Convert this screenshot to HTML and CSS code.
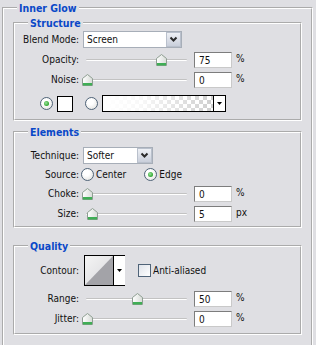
FILE: index.html
```html
<!DOCTYPE html>
<html>
<head>
<meta charset="utf-8">
<link rel="stylesheet" href="styles.css">
</head>
<body>
<fieldset class="grp outer">
  <legend class="title">Inner Glow</legend>

  <fieldset class="grp sub structure">
    <legend class="title">Structure</legend>
    <div class="row">
      <span class="lbl">Blend Mode:</span>
      <div class="select sel-blend">
        <span class="val">Screen</span>
        <span class="btn"><svg width="13" height="13" viewBox="0 0 13 13"><path d="M3.5 4.5 L6.5 7.5 L9.5 4.5" fill="none" stroke="#2b2b2b" stroke-width="2"/></svg></span>
      </div>
    </div>
    <div class="row r-opacity">
      <span class="lbl">Opacity:</span>
      <div class="slider"><div class="rail"><div class="track"></div><span class="thumb" style="left:calc(75% - 5px)"><svg width="11" height="12" viewBox="0 0 11 12"><defs><linearGradient id="tg1" x1="0" y1="0" x2="1" y2="0"><stop offset="0" stop-color="#ffffff"/><stop offset="1" stop-color="#d8dcd8"/></linearGradient></defs><path d="M0.5 4.5 L5.5 0.5 L10.5 4.5 V11.5 H0.5 Z" fill="url(#tg1)" stroke="#8e9e92"/><rect x="1" y="9" width="9" height="2.5" fill="#3fae55"/></svg></span></div></div>
      <div class="num">75</div><span class="unit">%</span>
    </div>
    <div class="row r-noise">
      <span class="lbl">Noise:</span>
      <div class="slider"><div class="rail"><div class="track"></div><span class="thumb" style="left:calc(0% - 5px)"><svg width="11" height="12" viewBox="0 0 11 12"><path d="M0.5 4.5 L5.5 0.5 L10.5 4.5 V11.5 H0.5 Z" fill="url(#tg1)" stroke="#8e9e92"/><rect x="1" y="9" width="9" height="2.5" fill="#3fae55"/></svg></span></div></div>
      <div class="num">0</div><span class="unit">%</span>
    </div>
    <div class="row r-fill">
      <span class="radio on"></span>
      <span class="swatch"></span>
      <span class="radio r2"></span>
      <div class="gradpick">
        <span class="grad"></span>
        <span class="arrow"><svg width="5" height="3" viewBox="0 0 5 3"><path d="M0 0 H5 L2.5 3 Z" fill="#000"/></svg></span>
      </div>
    </div>
  </fieldset>

  <fieldset class="grp sub elements">
    <legend class="title">Elements</legend>
    <div class="row">
      <span class="lbl">Technique:</span>
      <div class="select sel-tech">
        <span class="val">Softer</span>
        <span class="btn"><svg width="13" height="13" viewBox="0 0 13 13"><path d="M3.5 4.5 L6.5 7.5 L9.5 4.5" fill="none" stroke="#2b2b2b" stroke-width="2"/></svg></span>
      </div>
    </div>
    <div class="row r-source">
      <span class="lbl">Source:</span>
      <span class="radio rs1"></span><span class="rtext">Center</span>
      <span class="radio on rs2"></span><span class="rtext">Edge</span>
    </div>
    <div class="row r-choke">
      <span class="lbl">Choke:</span>
      <div class="slider"><div class="rail"><div class="track"></div><span class="thumb" style="left:calc(0% - 5px)"><svg width="11" height="12" viewBox="0 0 11 12"><path d="M0.5 4.5 L5.5 0.5 L10.5 4.5 V11.5 H0.5 Z" fill="url(#tg1)" stroke="#8e9e92"/><rect x="1" y="9" width="9" height="2.5" fill="#3fae55"/></svg></span></div></div>
      <div class="num">0</div><span class="unit">%</span>
    </div>
    <div class="row r-size">
      <span class="lbl">Size:</span>
      <div class="slider"><div class="rail"><div class="track"></div><span class="thumb" style="left:calc(5% - 5px)"><svg width="11" height="12" viewBox="0 0 11 12"><path d="M0.5 4.5 L5.5 0.5 L10.5 4.5 V11.5 H0.5 Z" fill="url(#tg1)" stroke="#8e9e92"/><rect x="1" y="9" width="9" height="2.5" fill="#3fae55"/></svg></span></div></div>
      <div class="num">5</div><span class="unit">px</span>
    </div>
  </fieldset>

  <fieldset class="grp sub quality">
    <legend class="title">Quality</legend>
    <div class="row r-contour">
      <span class="lbl">Contour:</span>
      <div class="contour">
        <svg class="preview" width="28" height="29" viewBox="0 0 28 29"><defs><linearGradient id="cg" x1="0" y1="0" x2="1" y2="1"><stop offset="0" stop-color="#f4f4f4"/><stop offset="1" stop-color="#d8d8dc"/></linearGradient></defs><rect width="28" height="29" fill="url(#cg)"/><path d="M0 29 L28 0 V29 Z" fill="#a3a3a8"/></svg>
        <span class="arrow"><svg width="5" height="3" viewBox="0 0 5 3"><path d="M0 0 H5 L2.5 3 Z" fill="#000"/></svg></span>
      </div>
      <span class="check"></span><span class="ctext">Anti-aliased</span>
    </div>
    <div class="row r-range">
      <span class="lbl">Range:</span>
      <div class="slider"><div class="rail"><div class="track"></div><span class="thumb" style="left:calc(50% - 5px)"><svg width="11" height="12" viewBox="0 0 11 12"><path d="M0.5 4.5 L5.5 0.5 L10.5 4.5 V11.5 H0.5 Z" fill="url(#tg1)" stroke="#8e9e92"/><rect x="1" y="9" width="9" height="2.5" fill="#3fae55"/></svg></span></div></div>
      <div class="num">50</div><span class="unit">%</span>
    </div>
    <div class="row r-jitter">
      <span class="lbl">Jitter:</span>
      <div class="slider"><div class="rail"><div class="track"></div><span class="thumb" style="left:calc(0% - 5px)"><svg width="11" height="12" viewBox="0 0 11 12"><path d="M0.5 4.5 L5.5 0.5 L10.5 4.5 V11.5 H0.5 Z" fill="url(#tg1)" stroke="#8e9e92"/><rect x="1" y="9" width="9" height="2.5" fill="#3fae55"/></svg></span></div></div>
      <div class="num">0</div><span class="unit">%</span>
    </div>
  </fieldset>
</fieldset>
</body>
</html>
```

FILE: styles.css
```css
html, body {
  margin: 0;
  height: 100%;
  overflow: hidden;
  background: #dfdfe3;
}
body {
  font-family: "DejaVu Sans Condensed", "DejaVu Sans", sans-serif;
  font-size: 10px;
  color: #111;
}
.grp {
  border: 2px groove #ffffff;
  margin: 0;
  min-width: 0;
}
.outer {
  margin: 1px 3px 0 2px;
  padding: 1px 9px 16px 9px;
}
.title {
  font-weight: bold;
  color: #0a48c8;
  font-size: 10.5px;
  line-height: 14px;
  padding: 0 2px;
}
.outer > .title { margin-left: 4px; }
.sub > .title { margin-left: 13px; }
.structure { padding: 1px 0 7px 0; }
.elements { margin-top: 4px; padding: 8px 0 4px 0; }
.quality { margin-top: 11px; padding: 2px 0 6px 0; }

.row {
  display: flex;
  align-items: center;
  height: 17px;
}
.lbl {
  flex: none;
  width: 64px;
  text-align: right;
  white-space: nowrap;
}
.r-opacity, .r-noise { margin-top: 3px; }
.r-fill { margin-top: 7px; padding-left: 25px; }
.r-source { margin-top: 2px; }
.r-choke { margin-top: 2px; }
.r-size { margin-top: 3px; }
.r-contour { height: 31px; }
.r-range { margin-top: 4px; }
.r-jitter { margin-top: 3px; }

/* select */
.select {
  display: flex;
  align-items: center;
  height: 17px;
  box-sizing: border-box;
  border: 1px solid #a7aeb8;
  background: #fff;
  margin-left: 4px;
}
.sel-blend { width: 99px; }
.sel-tech { width: 70px; }
.select .val { flex: 1; padding-left: 3px; }
.select .btn {
  width: 15px;
  height: 15px;
  box-sizing: border-box;
  border: 1px solid #b9c0cc;
  background: linear-gradient(#eef0f5, #c9cfdb);
  display: flex;
  align-items: center;
  justify-content: center;
}

/* slider */
.slider {
  flex: none;
  width: 109px;
  height: 17px;
  padding: 0 5px;
  box-sizing: border-box;
  margin-left: 3px;
}
.rail {
  position: relative;
  height: 100%;
}
.track {
  margin: 0 -1px;
  padding-top: 8px;
  height: 0;
}
.track::after {
  content: "";
  display: block;
  height: 1px;
  background: #c2c2c2;
  border-bottom: 1px solid #ffffff;
  border-radius: 1px;
}
.thumb {
  position: absolute;
  top: 3px;
  width: 11px;
  height: 12px;
  display: block;
}
.thumb svg { display: block; }

.num {
  flex: none;
  width: 38px;
  height: 16px;
  box-sizing: border-box;
  margin-left: 3px;
  background: #fff;
  border: 1px solid;
  border-color: #7d7d7d #c9c9c9 #c9c9c9 #7d7d7d;
  padding-left: 4px;
  line-height: 15px;
}
.unit { margin-left: 4px; margin-top: -3px; }

/* radio */
.radio {
  flex: none;
  width: 13px;
  height: 13px;
  box-sizing: border-box;
  border-radius: 50%;
  border: 1px solid #4f6378;
  background: radial-gradient(circle at 40% 35%, #ffffff 30%, #dcdcd8 100%);
  display: flex;
  align-items: center;
  justify-content: center;
}
.radio.on::after {
  content: "";
  width: 5px;
  height: 5px;
  border-radius: 50%;
  background: radial-gradient(circle at 40% 40%, #9be39b, #2ea52e 70%);
}
.swatch {
  flex: none;
  width: 16px;
  height: 16px;
  box-sizing: border-box;
  border: 1px solid #000;
  background: #fff;
  margin-left: 4px;
}
.r2 { margin-left: 12px; }
.gradpick {
  flex: none;
  display: flex;
  width: 124px;
  height: 17px;
  box-sizing: border-box;
  border: 1px solid #000;
  margin-left: 4px;
  background: #fff;
}
.grad {
  flex: 1;
  background:
    linear-gradient(to right, #ffffff 0%, rgba(255,255,255,0.85) 35%, rgba(255,255,255,0) 100%),
    conic-gradient(#cfcfcf 25%, #ffffff 0 50%, #cfcfcf 0 75%, #ffffff 0) 0 0 / 8px 8px;
}
.arrow {
  flex: none;
  width: 11px;
  border-left: 1px solid #000;
  background: #fff;
  display: flex;
  align-items: center;
  justify-content: center;
}
.arrow svg { display: block; }

.rs1 { margin-left: 2px; }
.rtext { margin-left: 2px; }
.rs2 { margin-left: 18px; }

/* contour */
.contour {
  flex: none;
  display: flex;
  width: 41px;
  height: 31px;
  box-sizing: border-box;
  border: 1px solid #000;
  margin-left: 5px;
  background: #fff;
}
.contour .preview { display: block; flex: none; }
.contour .arrow { width: 11px; }
.check {
  flex: none;
  width: 13px;
  height: 13px;
  box-sizing: border-box;
  border: 1px solid #4f6378;
  background: linear-gradient(135deg, #dfe3ea, #ffffff);
  margin-left: 13px;
}
.ctext { margin-left: 2px; }
```
